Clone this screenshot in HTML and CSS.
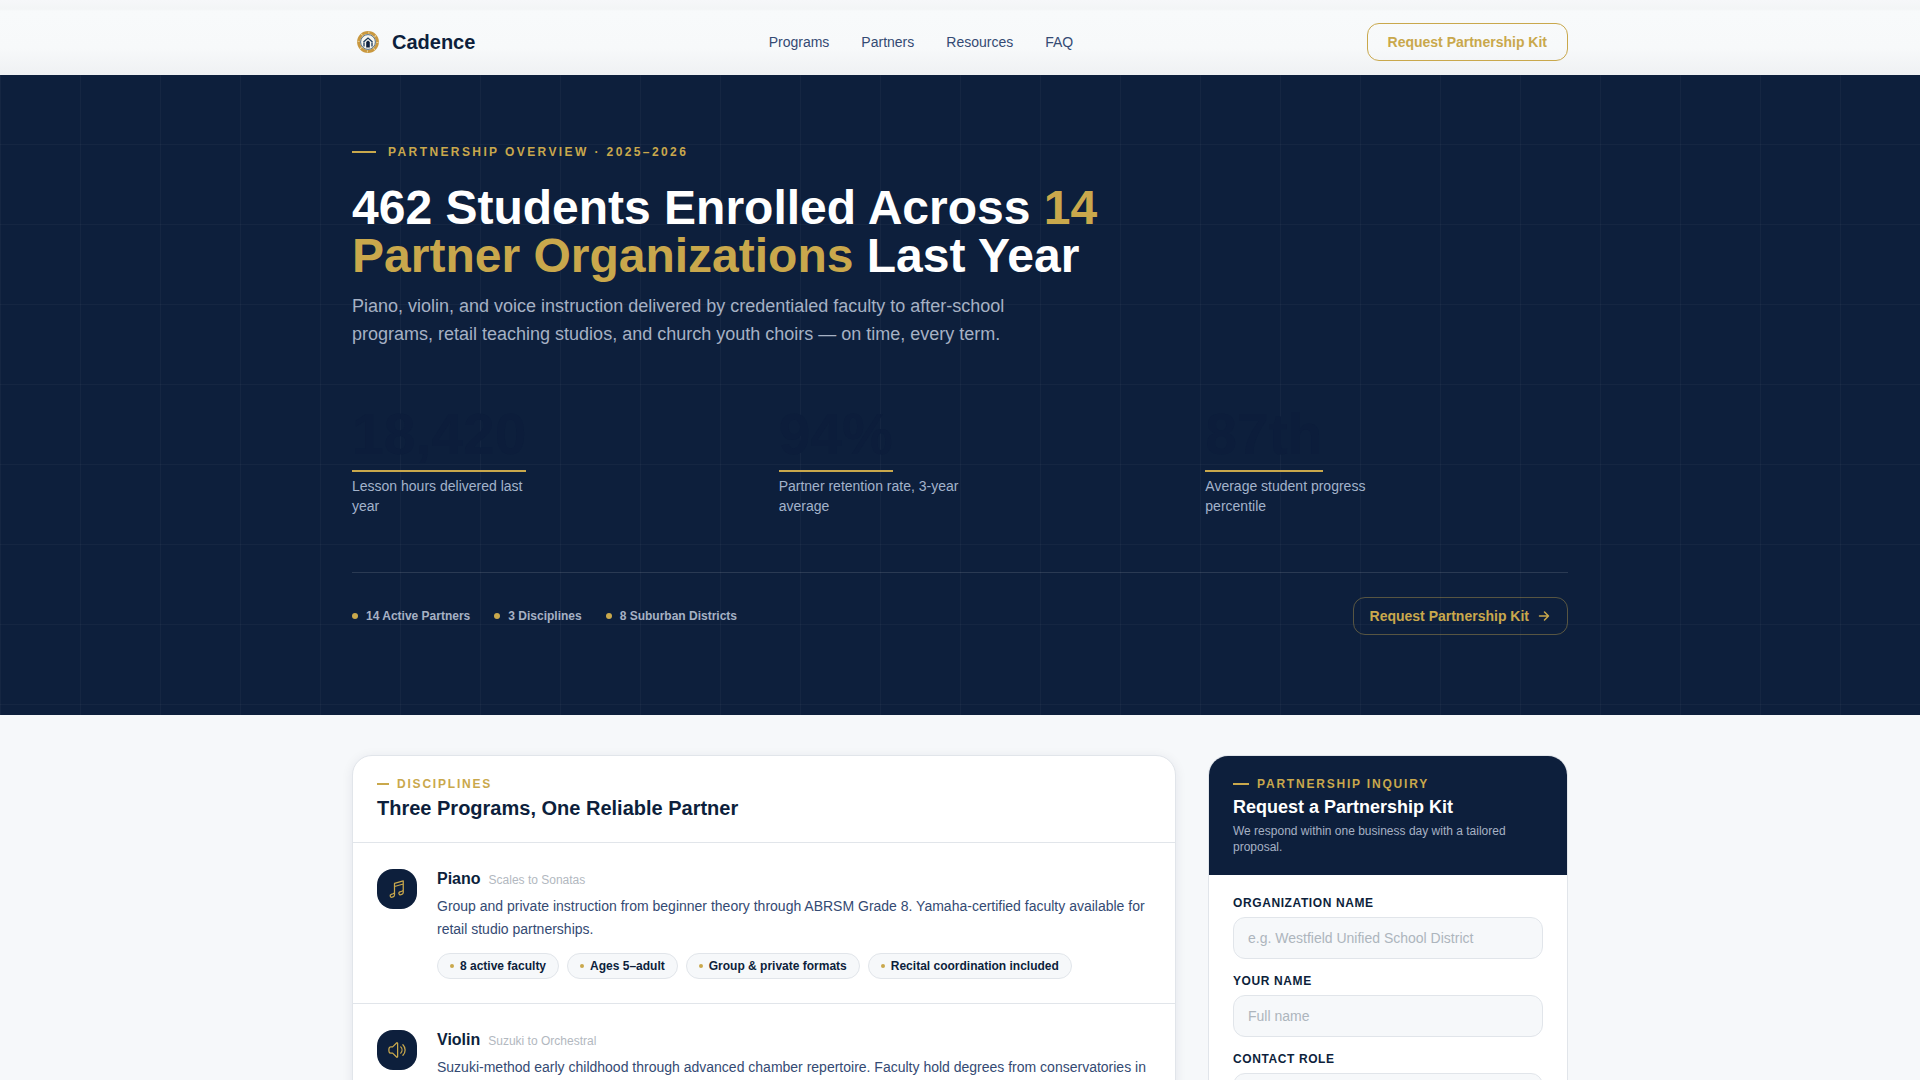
FILE: index.html
```html
<!DOCTYPE html>
<html lang="en">
<head>
	<meta charset="utf-8">
	<title>Cadence</title>
	<link rel="stylesheet" href="styles.css">
</head>
<body>
	<header class="header">
		<div class="container header_inner">
			<a class="logo" href="#">
				<svg width="32" height="32" viewBox="0 0 32 32">
					<circle cx="16" cy="16" r="9.4" fill="#f7f6ef" stroke="#c9983f" stroke-width="3"/>
					<circle cx="16" cy="16" r="9.4" fill="none" stroke="#ecd9a5" stroke-width="2" stroke-dasharray="1 6.4"/>
					<circle cx="16" cy="16" r="7.4" fill="none" stroke="#53708a" stroke-width="1"/>
					<path d="M11.500 16l4.500-4 4.500 4M12 16.500v4M20 16.500v4" fill="none" stroke="#1c3a5c" stroke-width="1.300"/>
					<path d="M14.200 21.500v-5.500L16 14.500l1.800 1.500v5.500z" fill="#0d1f3c"/>
				</svg>
				<span>Cadence</span>
			</a>
			<nav class="nav">
				<a href="#">Programs</a>
				<a href="#">Partners</a>
				<a href="#">Resources</a>
				<a href="#">FAQ</a>
			</nav>
			<a class="btn btn_header" href="#inquiry">Request Partnership Kit</a>
		</div>
	</header>

	<section class="hero">
		<div class="container">
			<p class="eyebrow eyebrow_hero">Partnership Overview · 2025–2026</p>
			<h1>462 Students Enrolled Across <em>14 Partner Organizations</em> Last Year</h1>
			<p class="lead">Piano, violin, and voice instruction delivered by credentialed faculty to after-school programs, retail teaching studios, and church youth choirs — on time, every term.</p>

			<div class="stats">
				<div class="stat">
					<span class="stat_number">18,420</span>
					<p>Lesson hours delivered last year</p>
				</div>
				<div class="stat">
					<span class="stat_number">94%</span>
					<p>Partner retention rate, 3-year average</p>
				</div>
				<div class="stat">
					<span class="stat_number">87th</span>
					<p>Average student progress percentile</p>
				</div>
			</div>

			<div class="hero_bottom">
				<ul class="facts">
					<li>14 Active Partners</li>
					<li>3 Disciplines</li>
					<li>8 Suburban Districts</li>
				</ul>
				<a class="btn btn_hero" href="#inquiry">
					Request Partnership Kit
					<svg width="14" height="14" viewBox="0 0 14 14">
						<path d="M2.500 7h9M7.500 3l4 4-4 4" fill="none" stroke="currentColor" stroke-width="1.500" stroke-linecap="round" stroke-linejoin="round"/>
					</svg>
				</a>
			</div>
		</div>
	</section>

	<main class="container main">
		<section class="card">
			<div class="card_head">
				<p class="eyebrow eyebrow_card">Disciplines</p>
				<h2>Three Programs, One Reliable Partner</h2>
			</div>

			<article class="program">
				<div class="program_icon">
					<svg width="20" height="20" viewBox="0 0 24 24">
						<path d="M9 9l10.500-3m0 6.553v3.750a2.250 2.250 0 01-1.632 2.163l-1.320.377a1.803 1.803 0 11-.990-3.467l2.310-.660a2.250 2.250 0 001.632-2.163zm0 0V2.250L9 5.250v10.303m0 0v3.750a2.250 2.250 0 01-1.632 2.163l-1.320.377a1.803 1.803 0 01-.990-3.467l2.310-.660A2.250 2.250 0 009 15.553z"/>
					</svg>
				</div>
				<div class="program_body">
					<h3>Piano <small>Scales to Sonatas</small></h3>
					<p>Group and private instruction from beginner theory through ABRSM Grade 8. Yamaha-certified faculty available for retail studio partnerships.</p>
					<ul class="tags">
						<li>8 active faculty</li>
						<li>Ages 5–adult</li>
						<li>Group &amp; private formats</li>
						<li>Recital coordination included</li>
					</ul>
				</div>
			</article>

			<article class="program">
				<div class="program_icon">
					<svg width="20" height="20" viewBox="0 0 24 24">
						<path d="M19.114 5.636a9 9 0 010 12.728M16.463 8.288a5.250 5.250 0 010 7.424M6.750 8.250l4.720-4.720a.75.75 0 011.280.530v15.880a.75.75 0 01-1.280.530l-4.720-4.720H4.510c-.880 0-1.704-.507-1.938-1.354A9.010 9.010 0 012.250 12c0-.830.112-1.633.322-2.396C2.806 8.756 3.630 8.250 4.510 8.250H6.750z"/>
					</svg>
				</div>
				<div class="program_body">
					<h3>Violin <small>Suzuki to Orchestral</small></h3>
					<p>Suzuki-method early childhood through advanced chamber repertoire. Faculty hold degrees from conservatories in</p>
				</div>
			</article>
		</section>

		<aside class="inquiry" id="inquiry">
			<div class="inquiry_head">
				<p class="eyebrow eyebrow_inquiry">Partnership Inquiry</p>
				<h2>Request a Partnership Kit</h2>
				<p class="inquiry_note">We respond within one business day with a tailored proposal.</p>
			</div>
			<form class="inquiry_form">
				<div class="field">
					<label for="org">Organization Name</label>
					<input type="text" id="org" placeholder="e.g. Westfield Unified School District">
				</div>
				<div class="field">
					<label for="name">Your Name</label>
					<input type="text" id="name" placeholder="Full name">
				</div>
				<div class="field">
					<label for="role">Contact Role</label>
					<input type="text" id="role">
				</div>
			</form>
		</aside>
	</main>
</body>
</html>
```
FILE: styles.css
```css
* {
	margin: 0;
	padding: 0;
	box-sizing: border-box;
}
body {
	background: #f6f8fa;
	color: #0d1f3c;
	font-family: "Liberation Sans", Arial, sans-serif;
	font-size: 14px;
	/* the page is cut at the fold */
	height: 100vh;
	overflow: hidden;
}
a {
	color: inherit;
	text-decoration: none;
}
ul {
	list-style: none;
}
.container {
	width: 100%;
	max-width: 1264px;
	margin: 0 auto;
	padding: 0 24px;
}

/* header */
.header {
	padding: 23px 0 14px;
	background: linear-gradient(#f6f7f9 0, #f3f5f6 9px, #f8fafb 11px, #f7f9fa 48px, #eff1f3 75px);
}
.header_inner {
	display: flex;
	align-items: center;
	justify-content: space-between;
}
.logo {
	display: flex;
	align-items: center;
	gap: 8px;
	font-size: 20px;
	font-weight: bold;
}
.nav {
	display: flex;
	gap: 32px;
	color: #344a73;
}
.btn {
	display: flex;
	align-items: center;
	height: 38px;
	border: 1px solid #c9a84c;
	border-radius: 12px;
	color: #c9a84c;
	font-weight: bold;
}
.btn_header {
	padding: 0 20px;
}

/* hero */
.hero {
	padding: 68px 0 80px;
	background-color: #0d1f3c;
	background-image:
		linear-gradient(rgba(255, 255, 255, .03) 1px, transparent 1px),
		linear-gradient(90deg, rgba(255, 255, 255, .03) 1px, transparent 1px);
	background-size: 80px 80px;
	background-position: 0 -11px;
}
.eyebrow {
	display: flex;
	align-items: center;
	color: #c9a84c;
	font-size: 12px;
	line-height: 18px;
	font-weight: bold;
	letter-spacing: .15em;
	text-transform: uppercase;
}
.eyebrow::before {
	content: "";
	height: 2px;
	background: #c9a84c;
}
.eyebrow_hero {
	gap: 12px;
	margin-bottom: 23px;
	letter-spacing: .2em;
}
.eyebrow_hero::before {
	width: 24px;
}
h1 {
	max-width: 800px;
	margin-bottom: 12px;
	color: #fff;
	font-size: 48px;
	line-height: 48px;
}
h1 em {
	color: #c9a84c;
	font-style: normal;
}
.lead {
	max-width: 672px;
	color: #a6b1c4;
	font-size: 18px;
	line-height: 28px;
}
.stats {
	display: grid;
	grid-template-columns: repeat(3, 1fr);
	gap: 64px;
	margin-top: 58px;
	color: #a3b3cb;
}
.stat_number {
	display: inline-block;
	padding-bottom: 8px;
	border-bottom: 2px solid #c9a84c;
	color: #0c1d3b;
	font-size: 57px;
	line-height: 56px;
	font-weight: bold;
	vertical-align: top;
}
.stat p {
	max-width: 200px;
	margin-top: 4px;
	line-height: 20px;
}
.hero_bottom {
	display: flex;
	align-items: center;
	justify-content: space-between;
	margin-top: 56px;
	padding-top: 24px;
	border-top: 1px solid rgba(255, 255, 255, .12);
}
.facts {
	display: flex;
	gap: 24px;
	color: #a6b1c4;
	font-size: 12px;
	font-weight: bold;
}
.facts li {
	display: flex;
	align-items: center;
	gap: 8px;
}
.facts li::before {
	content: "";
	width: 6px;
	height: 6px;
	border-radius: 50%;
	background: #c9a84c;
}
.btn_hero {
	gap: 8px;
	padding: 0 16px;
	border-color: rgba(201, 168, 76, .4);
}

/* cards */
.main {
	display: grid;
	grid-template-columns: 824px 1fr;
	gap: 32px;
	margin-top: 40px;
}
.card,
.inquiry {
	border: 1px solid #e1e5ea;
	border-radius: 20px;
	background: #fff;
	overflow: hidden;
}
.card {
	box-shadow: 0 2px 12px rgba(13, 31, 60, .08);
}
.card_head {
	padding: 19px 24px 21px;
}
.eyebrow_card,
.eyebrow_inquiry {
	gap: 8px;
}
.eyebrow_card::before {
	width: 12px;
}
.card_head h2 {
	margin-top: 3px;
	font-size: 20px;
	line-height: 25px;
}
.program {
	display: flex;
	gap: 20px;
	padding: 24px;
	border-top: 1px solid #e1e5ea;
}
.program_icon {
	display: flex;
	align-items: center;
	justify-content: center;
	flex: none;
	width: 40px;
	height: 40px;
	margin-top: 2px;
	border-radius: 16px;
	background: #0d1f3c;
}
.program_icon path {
	fill: none;
	stroke: #c9a84c;
	stroke-width: 1.5;
	stroke-linecap: round;
	stroke-linejoin: round;
}
.program h3 {
	display: flex;
	align-items: baseline;
	gap: 8px;
	font-size: 16px;
	line-height: 24px;
}
.program small {
	color: #b2b8c0;
	font-size: 12px;
	font-weight: normal;
}
.program p {
	margin-top: 3px;
	color: #344a73;
	line-height: 23px;
}
.tags {
	display: flex;
	flex-wrap: wrap;
	gap: 8px;
	margin-top: 12px;
}
.tags li {
	display: flex;
	align-items: center;
	gap: 6px;
	height: 26px;
	padding: 0 12px;
	border: 1px solid #e1e5ea;
	border-radius: 13px;
	background: #f6f8fa;
	font-size: 12px;
	font-weight: bold;
}
.tags li::before {
	content: "";
	width: 4px;
	height: 4px;
	border-radius: 50%;
	background: #c9a84c;
}

/* inquiry */
.inquiry_head {
	padding: 19px 24px 20px;
	background: #0d1f3c;
}
.eyebrow_inquiry::before {
	width: 16px;
}
.inquiry h2 {
	margin-top: 1px;
	color: #fff;
	font-size: 18px;
	line-height: 27px;
}
.inquiry_note {
	margin-top: 2px;
	color: #a6b1c4;
	font-size: 12px;
	line-height: 16px;
}
.inquiry_form {
	padding: 19px 24px;
}
.field {
	margin-bottom: 13px;
}
.field label {
	display: block;
	margin-bottom: 5px;
	font-size: 12px;
	line-height: 18px;
	font-weight: bold;
	letter-spacing: .05em;
	text-transform: uppercase;
}
.field input {
	display: block;
	width: 100%;
	height: 42px;
	padding: 0 14px;
	border: 1px solid #e1e5ea;
	border-radius: 12px;
	background: #f6f8fa;
	font-family: inherit;
	font-size: 14px;
}
.field input::placeholder {
	color: #adb5bd;
}
```
